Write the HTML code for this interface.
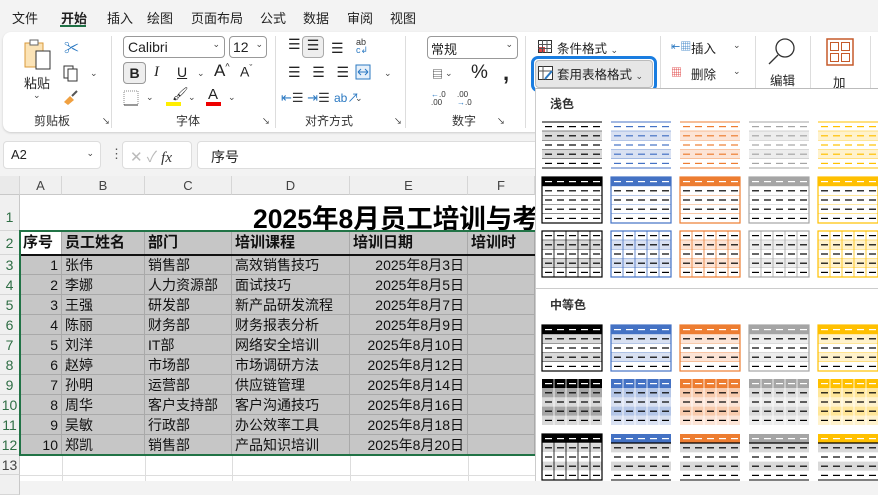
<!DOCTYPE html>
<html><head><meta charset="utf-8">
<style>
*{margin:0;padding:0;box-sizing:border-box}
body{width:878px;height:481px;overflow:hidden;background:#f3f3f3;font-family:"Liberation Sans","Noto Sans CJK SC",sans-serif;font-size:13px;color:#222;position:relative}
.a{position:absolute;white-space:nowrap}
.menu span{position:absolute;top:8px;font-size:13px}
.rib{position:absolute;left:3px;top:32px;width:900px;height:100px;background:#fff;border-radius:8px;box-shadow:0 1px 2px #ccc}
.sep{position:absolute;top:36px;width:1px;height:92px;background:#ddd}
.glab{position:absolute;top:112px;font-size:12px;color:#333}
.box{position:absolute;border:1px solid #999;border-radius:4px;background:#fff}
.caret{font-size:9px;color:#444}
.grid{position:absolute;left:0;top:176px;width:535px;height:305px;background:#fff}
.ch{position:absolute;top:0;height:19px;background:#f0f0f0;border-right:1px solid #d6d6d6;border-bottom:1px solid #c8c8c8;text-align:center;line-height:19px;color:#444;font-size:13px}
.rh{position:absolute;left:0;width:20px;background:#f0f0f0;border-bottom:1px solid #d6d6d6;border-right:1px solid #c8c8c8;text-align:center;color:#2f6e45;font-size:14px}
.c{position:absolute;height:20px;line-height:20px;font-size:14px;color:#111;border-right:1px solid #a9a9a9;border-bottom:1px solid #a9a9a9;background:#c6c6c6;padding:0 3px;overflow:hidden}
.panel{position:absolute;left:535px;top:88px;width:343px;height:393px;background:#fff;border-left:1px solid #ccc;border-top:1px solid #bbb}
</style></head><body>
<div class="menu">
<span style="left:12px">文件</span><span style="left:61px;font-weight:bold">开始</span><span style="left:107px">插入</span><span style="left:147px">绘图</span><span style="left:191px">页面布局</span><span style="left:260px">公式</span><span style="left:303px">数据</span><span style="left:347px">审阅</span><span style="left:390px">视图</span>
</div>
<div class="a" style="left:60px;top:25px;width:26px;height:2px;background:#1e7145"></div>
<div class="rib"></div>
<svg class="a" style="left:22px;top:38px" width="32" height="34"><rect x="3" y="5" width="18" height="24" fill="#fbe3b6" stroke="#d89a3a"/><rect x="8" y="2" width="8" height="5" fill="#fff" stroke="#666"/><rect x="14" y="13" width="14" height="18" fill="#fff" stroke="#333"/></svg>
<div class="a" style="left:24px;top:73px;font-size:13px">粘贴</div>
<div class="a caret" style="left:33px;top:90px">⌄</div>
<div class="a" style="left:64px;top:37px;color:#2b79c2;font-size:15px">✂</div>
<svg class="a" style="left:62px;top:64px" width="18" height="18"><rect x="2" y="2" width="9" height="12" fill="none" stroke="#333"/><rect x="6" y="5" width="9" height="12" fill="#fff" stroke="#333"/></svg>
<div class="a caret" style="left:90px;top:68px">⌄</div>
<svg class="a" style="left:62px;top:90px" width="18" height="16"><path d="M2 12 L8 6 L12 10 L6 15Z" fill="#f0a040"/><path d="M10 6 L15 1" stroke="#555" stroke-width="2"/></svg>
<div class="glab" style="left:34px">剪贴板</div><div class="a" style="left:102px;top:116px;font-size:8px">↘</div>
<div class="sep" style="left:111px"></div>
<div class="box" style="left:123px;top:36px;width:102px;height:22px;padding:2px 4px;font-size:14px">Calibri<span class="caret" style="position:absolute;right:4px;top:2px">⌄</span></div>
<div class="box" style="left:229px;top:36px;width:38px;height:22px;padding:2px 3px;font-size:14px">12<span class="caret" style="position:absolute;right:3px;top:2px">⌄</span></div>
<div class="box" style="left:123px;top:62px;width:23px;height:22px;background:#eee;text-align:center;font-weight:bold;font-size:14px;line-height:20px">B</div>
<div class="a" style="left:154px;top:64px;font-style:italic;font-size:15px;font-family:'Liberation Serif',serif">I</div>
<div class="a" style="left:177px;top:64px;font-size:14px;text-decoration:underline">U</div>
<div class="a caret" style="left:197px;top:68px">⌄</div>
<div class="a" style="left:214px;top:61px;font-size:17px">A<sup style="font-size:9px">^</sup></div>
<div class="a" style="left:240px;top:63px;font-size:14px">A<sup style="font-size:9px">ˇ</sup></div>
<svg class="a" style="left:123px;top:90px" width="16" height="16"><rect x="1" y="1" width="14" height="14" fill="none" stroke="#888" stroke-dasharray="1 1"/><line x1="1" y1="15" x2="15" y2="15" stroke="#333"/></svg>
<div class="a caret" style="left:146px;top:92px">⌄</div>
<div class="a" style="left:172px;top:86px;font-size:13px">🖌</div>
<div class="a" style="left:166px;top:102px;width:15px;height:4px;background:#ffee00"></div>
<div class="a caret" style="left:188px;top:92px">⌄</div>
<div class="a" style="left:208px;top:86px;font-size:15px">A</div>
<div class="a" style="left:206px;top:102px;width:15px;height:4px;background:#e00"></div>
<div class="a caret" style="left:228px;top:92px">⌄</div>
<div class="glab" style="left:176px">字体</div><div class="a" style="left:262px;top:116px;font-size:8px">↘</div>
<div class="sep" style="left:275px"></div>
<div class="a" style="left:288px;top:36px;font-size:14px">☰</div>
<div class="box" style="left:302px;top:36px;width:22px;height:22px;background:#eee;border-color:#aaa;text-align:center;font-size:14px">☰</div>
<div class="a" style="left:331px;top:40px;font-size:14px">☰</div>
<div class="a" style="left:356px;top:38px;font-size:9px;color:#333;line-height:8px">ab<br><span style="color:#2b79c2">c↲</span></div>
<div class="a" style="left:288px;top:64px;font-size:14px">☰ &nbsp; ☰ &nbsp; ☰</div>
<svg class="a" style="left:355px;top:64px" width="16" height="16"><rect x="1" y="1" width="14" height="14" fill="#e6f0fa" stroke="#2b79c2"/><path d="M3 8H13M3 8l3-3M3 8l3 3M13 8l-3-3M13 8l-3 3" stroke="#2b79c2" fill="none"/></svg>
<div class="a caret" style="left:384px;top:68px">⌄</div>
<div class="a" style="left:281px;top:90px;font-size:13px;color:#2b79c2">⇤<span style="color:#333">☰</span> ⇥<span style="color:#333">☰</span></div>
<div class="a" style="left:334px;top:89px;font-size:12px;color:#2b79c2">ab↗</div>
<div class="a caret" style="left:355px;top:93px">⌄</div>
<div class="glab" style="left:305px">对齐方式</div><div class="a" style="left:394px;top:116px;font-size:8px">↘</div>
<div class="sep" style="left:405px"></div>
<div class="box" style="left:427px;top:36px;width:91px;height:23px;padding:2px 3px;font-size:13px">常规<span class="caret" style="position:absolute;right:4px;top:2px">⌄</span></div>
<div class="a" style="left:432px;top:66px;font-size:11px">▤</div>
<div class="a caret" style="left:445px;top:68px">⌄</div>
<div class="a" style="left:471px;top:62px;font-size:19px">%</div>
<div class="a" style="left:503px;top:60px;font-size:22px;font-weight:bold">,</div>
<div class="a" style="left:431px;top:91px;font-size:8px;line-height:8px;color:#333"><span style="color:#2b79c2">←</span>.0<br>.00</div>
<div class="a" style="left:457px;top:91px;font-size:8px;line-height:8px;color:#333">.00<br><span style="color:#2b79c2">→</span>.0</div>
<div class="glab" style="left:452px">数字</div><div class="a" style="left:497px;top:116px;font-size:8px">↘</div>
<div class="sep" style="left:525px"></div>
<svg class="a" style="left:538px;top:40px" width="14" height="13"><rect x="0.5" y="0.5" width="13" height="12" fill="#fff" stroke="#333"/><rect x="1" y="7" width="6" height="5" fill="#e04848"/><path d="M0 4.5H14M0 8.5H14M4.5 0V13M9 0V13" stroke="#555"/></svg>
<div class="a" style="left:557px;top:38px;font-size:12.5px">条件格式 <span class="caret">⌄</span></div>
<div class="a" style="left:531px;top:56px;width:126px;height:36px;border:3px solid #1a7de0;border-radius:7px;background:#fff"></div>
<div class="a" style="left:535px;top:60px;width:118px;height:28px;background:#e6e6e6;border:1px solid #bbb;border-radius:4px"></div>
<svg class="a" style="left:538px;top:66px" width="16" height="16"><rect x="0.5" y="0.5" width="14" height="13" fill="#fff" stroke="#333"/><path d="M0 5H15M5 0V14" stroke="#555"/><path d="M7 13L14 5" stroke="#2b79c2" stroke-width="2"/></svg>
<div class="a" style="left:557px;top:64px;font-size:12.5px">套用表格格式 <span class="caret">⌄</span></div>
<div class="sep" style="left:660px;height:56px"></div>
<div class="a" style="left:671px;top:38px;font-size:11px;color:#2b79c2">⇤▦</div>
<div class="a" style="left:691px;top:38px;font-size:12.5px">插入</div><div class="a caret" style="left:733px;top:40px">⌄</div>
<div class="a" style="left:671px;top:64px;font-size:11px;color:#d33">▦</div>
<div class="a" style="left:691px;top:64px;font-size:12.5px">删除</div><div class="a caret" style="left:733px;top:66px">⌄</div>
<div class="sep" style="left:755px;height:56px"></div>
<svg class="a" style="left:766px;top:36px" width="32" height="30"><circle cx="19" cy="12" r="9" fill="none" stroke="#333" stroke-width="1.3"/><line x1="12" y1="19" x2="3" y2="28" stroke="#333" stroke-width="1.3"/></svg>
<div class="a" style="left:770px;top:70px;font-size:12.5px">编辑</div>
<div class="sep" style="left:810px;height:56px"></div>
<svg class="a" style="left:826px;top:38px" width="28" height="28"><rect x="1" y="1" width="26" height="26" fill="#fff" stroke="#c55a2a" stroke-width="1.5"/><rect x="4.5" y="4.5" width="8" height="8" fill="none" stroke="#c55a2a"/><rect x="15.5" y="4.5" width="8" height="8" fill="none" stroke="#c55a2a"/><rect x="4.5" y="15.5" width="8" height="8" fill="none" stroke="#c55a2a"/><rect x="15.5" y="15.5" width="8" height="8" fill="none" stroke="#c55a2a"/></svg>
<div class="a" style="left:833px;top:72px;font-size:12.5px">加</div>
<div class="sep" style="left:870px;height:56px"></div>
<div class="box" style="left:3px;top:141px;width:98px;height:28px;border-color:#ddd;padding:5px 7px;font-size:13px">A2<span class="caret" style="position:absolute;right:6px;top:6px">⌄</span></div>
<div class="a" style="left:110px;top:146px;font-size:13px;color:#555">⋮</div>
<div class="box" style="left:122px;top:141px;width:70px;height:28px;border-color:#ddd;padding:4px 7px;font-size:15px;color:#bbb">✕ ✓ <i style="color:#333;font-family:'Liberation Serif',serif">fx</i></div>
<div class="box" style="left:197px;top:141px;width:360px;height:28px;border-color:#ddd;padding:5px 13px;font-size:14px">序号</div>
<div class="grid">
<div class="ch" style="left:0;width:20px;background:#eaeaea"></div>
<div class="ch" style="left:20px;width:42px">A</div>
<div class="ch" style="left:62px;width:83px">B</div>
<div class="ch" style="left:145px;width:87px">C</div>
<div class="ch" style="left:232px;width:118px">D</div>
<div class="ch" style="left:350px;width:118px">E</div>
<div class="ch" style="left:468px;width:67px">F</div>
<div class="rh" style="top:19px;height:36px;line-height:44px">1</div>
<div class="rh" style="top:55px;height:24px;line-height:24px">2</div>
<div class="rh" style="top:79px;height:20px;line-height:20px">3</div>
<div class="rh" style="top:99px;height:20px;line-height:20px">4</div>
<div class="rh" style="top:119px;height:20px;line-height:20px">5</div>
<div class="rh" style="top:139px;height:20px;line-height:20px">6</div>
<div class="rh" style="top:159px;height:20px;line-height:20px">7</div>
<div class="rh" style="top:179px;height:20px;line-height:20px">8</div>
<div class="rh" style="top:199px;height:20px;line-height:20px">9</div>
<div class="rh" style="top:219px;height:20px;line-height:20px">10</div>
<div class="rh" style="top:239px;height:20px;line-height:20px">11</div>
<div class="rh" style="top:259px;height:20px;line-height:20px">12</div>
<div class="rh" style="top:279px;height:20px;line-height:20px;color:#444">13</div>
<div class="rh" style="top:299px;height:20px"></div>
<div class="a" style="left:253px;top:21px;font-size:26.5px;font-weight:bold;color:#000">2025年8月员工培训与考</div>
<div id="cells"></div>
<div class="a" style="left:20px;top:299px;width:515px;height:1px;background:#ddd"></div>
<div class="a" style="left:62px;top:280px;width:1px;height:25px;background:#ddd"></div>
<div class="a" style="left:145px;top:280px;width:1px;height:25px;background:#ddd"></div>
<div class="a" style="left:232px;top:280px;width:1px;height:25px;background:#ddd"></div>
<div class="a" style="left:350px;top:280px;width:1px;height:25px;background:#ddd"></div>
<div class="a" style="left:468px;top:280px;width:1px;height:25px;background:#ddd"></div>
<div class="a" style="left:20px;top:78px;width:515px;height:2px;background:#111"></div>
<div class="a" style="left:19px;top:54px;width:520px;height:226px;border:2px solid #217346"></div>
</div>
<div class="panel">
<div class="a" style="left:14px;top:6px;font-size:12px;font-weight:bold;color:#333">浅色</div>
<div class="a" style="left:0;top:199px;width:343px;height:1px;background:#ccc"></div>
<div class="a" style="left:14px;top:207px;font-size:12px;font-weight:bold;color:#333">中等色</div>
<div id="th"></div>
</div>
<script>
(function(){
var D=[["序号","员工姓名","部门","培训课程","培训日期","培训时"],
["1","张伟","销售部","高效销售技巧","2025年8月3日"],["2","李娜","人力资源部","面试技巧","2025年8月5日"],["3","王强","研发部","新产品研发流程","2025年8月7日"],["4","陈丽","财务部","财务报表分析","2025年8月9日"],["5","刘洋","IT部","网络安全培训","2025年8月10日"],["6","赵婷","市场部","市场调研方法","2025年8月12日"],["7","孙明","运营部","供应链管理","2025年8月14日"],["8","周华","客户支持部","客户沟通技巧","2025年8月16日"],["9","吴敏","行政部","办公效率工具","2025年8月18日"],["10","郑凯","销售部","产品知识培训","2025年8月20日"]];
var X=[20,62,145,232,350,468,535],h="";
for(var r=0;r<11;r++){var ty=r==0?55:79+(r-1)*20,ht=r==0?24:20;
for(var c=0;c<6;c++){var t=D[r][c]||"",st="left:"+X[c]+"px;top:"+ty+"px;width:"+(X[c+1]-X[c])+"px;height:"+ht+"px;line-height:"+ht+"px;";
if(r==0){st+="font-weight:bold;font-size:15px;";if(c==0)st+="background:#fff;";}
else if(c==0||c==4)st+="text-align:right;";
h+='<div class="c" style="'+st+'">'+t+'</div>';}}
document.getElementById("cells").innerHTML=h;
var C=[["#000","#d9d9d9","#a6a6a6"],["#4472c4","#d9e1f2","#b4c6e7"],["#ed7d31","#fce4d6","#f8cbad"],["#a5a5a5","#ededed","#dbdbdb"],["#ffc000","#fff2cc","#ffe699"]];
var Y=[120,175,229,323,377,432],o="";
for(var i=0;i<6;i++)for(var k=0;k<5;k++){var x=540+k*69-535,y=Y[i]-88,cc=C[k],s='<svg class="a" style="left:'+x+'px;top:'+y+'px" width="62" height="48">';
var hdr=(i>=1&&i!=2),grid=(i==2||i==4||(i==5&&k==0)),box=(i==1||i==2||i==3||(i==5&&k==0));
for(var r=0;r<5;r++){var ry=1+r*9.2,fill="#fff";
if(hdr&&r==0)fill=cc[0];else if(r%2==1)fill=(i==5?"#d9d9d9":(i==4?cc[2]:cc[1]));else if(i==4)fill=cc[1];
if(i==1&&r>0)fill="#fff";
s+='<rect x="1" y="'+ry+'" width="60" height="9.2" fill="'+fill+'"/>';
if(i!=4&&!(i==5&&k>0))s+='<line x1="1" y1="'+(ry+9.2)+'" x2="61" y2="'+(ry+9.2)+'" stroke="'+(i==5?"#fff":cc[0])+'" stroke-width="0.8"/>';
for(var d=0;d<5;d++)s+='<line x1="'+(4+d*12)+'" y1="'+(ry+4.6)+'" x2="'+(11+d*12)+'" y2="'+(ry+4.6)+'" stroke="'+((hdr&&r==0)?"#fff":(i==0?cc[0]:"#000"))+'" stroke-width="1.2"/>';}
if(grid)for(var g=1;g<5;g++)s+='<line x1="'+(1+g*12)+'" y1="1" x2="'+(1+g*12)+'" y2="47" stroke="'+(i==4?"#fff":cc[0])+'" stroke-width="0.8"/>';
if(box)s+='<rect x="1" y="1" width="60" height="46" fill="none" stroke="'+cc[0]+'" stroke-width="1.2"/>';
if(i==0)s+='<line x1="1" y1="1" x2="61" y2="1" stroke="'+cc[0]+'"/><line x1="1" y1="47" x2="61" y2="47" stroke="'+cc[0]+'"/>';
if(i==5&&k>0)s+='<line x1="1" y1="10" x2="61" y2="10" stroke="#000" stroke-width="1.2"/><line x1="1" y1="47" x2="61" y2="47" stroke="#000"/>';
o+=s+'</svg>';}
document.getElementById("th").innerHTML=o;
})();
</script>
</body></html>
